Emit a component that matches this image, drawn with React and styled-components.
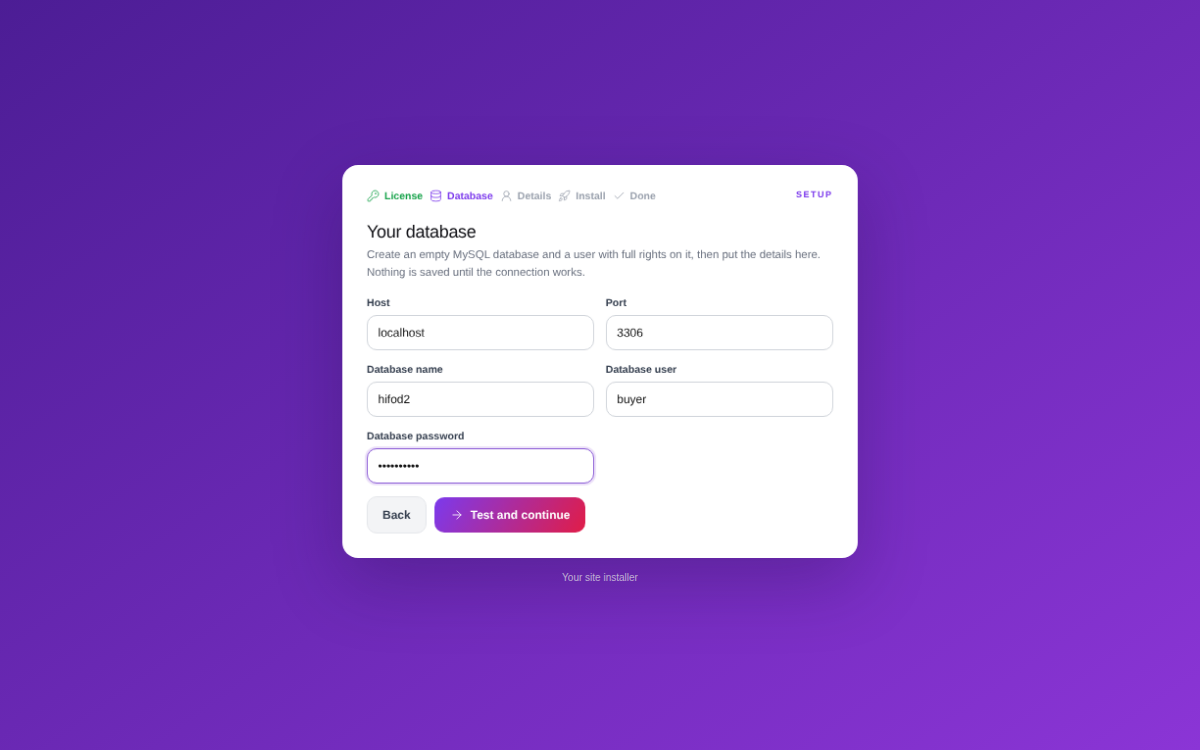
import React from "react";
import styled, { createGlobalStyle } from "styled-components";
import { KeyRound, Database, UserRound, Rocket, Check, ArrowRight } from "lucide-react";

const GlobalStyle = createGlobalStyle`
  * { box-sizing: border-box; }
  html, body { margin: 0; height: 100%; }
  body { font-family: "Liberation Sans", Arial, sans-serif; }
`;

const steps = [
  { label: "License", icon: KeyRound, state: "done" },
  { label: "Database", icon: Database, state: "active" },
  { label: "Details", icon: UserRound, state: "todo" },
  { label: "Install", icon: Rocket, state: "todo" },
  { label: "Done", icon: Check, state: "todo" },
];

const stepColors = { done: "#16a34a", active: "#7c3aed", todo: "#9ca3af" };

const App = () => {
  return (
    <Page>
      <GlobalStyle />
      <Card>
        <TopRow>
          <Steps>
            {steps.map((s) => (
              <Step key={s.label} $state={s.state}>
                <s.icon size={13} strokeWidth={1.5} />
                {s.label}
              </Step>
            ))}
          </Steps>
          <Tag>SETUP</Tag>
        </TopRow>
        <Title>Your database</Title>
        <Intro>
          Create an empty MySQL database and a user with full rights on it, then
          put the details here. Nothing is saved until the connection works.
        </Intro>
        <Fields>
          <Field>
            <Label>Host</Label>
            <Input defaultValue="localhost" />
          </Field>
          <Field>
            <Label>Port</Label>
            <Input defaultValue="3306" />
          </Field>
          <Field>
            <Label>Database name</Label>
            <Input defaultValue="hifod2" />
          </Field>
          <Field>
            <Label>Database user</Label>
            <Input defaultValue="buyer" />
          </Field>
          <Field>
            <Label>Database password</Label>
            <Input type="password" defaultValue="hifod2pass" $focused />
          </Field>
        </Fields>
        <Actions>
          <BackButton>Back</BackButton>
          <PrimaryButton>
            <ArrowRight size={14} strokeWidth={1.5} />
            Test and continue
          </PrimaryButton>
        </Actions>
      </Card>
      <Footer>Your site installer</Footer>
    </Page>
  );
};

const Page = styled.div`
  min-height: 100vh;
  display: flex;
  flex-direction: column;
  align-items: center;
  justify-content: center;
  background: linear-gradient(145deg, #4c1d95 0%, #8b35d6 100%);
`;
const Card = styled.div`
  width: 526px;
  height: 401px;
  padding: 25.5px 25.5px 25.5px 25px;
  background: #fff;
  border-radius: 16px;
  box-shadow: 0 24px 70px rgba(30, 10, 60, 0.28);
  transform: scale(0.98);
  will-change: transform;
  text-rendering: geometricPrecision;
`;
const TopRow = styled.div`
  display: flex;
  justify-content: space-between;
  align-items: center;
  height: 12px;
  margin-bottom: 18px;
`;
const Steps = styled.div`
  display: flex;
  align-items: center;
  gap: 7px;
`;
const Step = styled.span`
  display: inline-flex;
  align-items: center;
  gap: 5px;
  font-size: 10.5px;
  font-weight: 700;
  color: ${(p) => stepColors[p.$state]};
  svg {
    flex: none;
  }
`;
const Tag = styled.span`
  position: relative;
  top: -2px;
  font-size: 9px;
  font-weight: 700;
  letter-spacing: 1.5px;
  color: #7c3aed;
  line-height: 10px;
`;
const Title = styled.h1`
  margin: 0 0 3px;
  font-size: 18px;
  font-weight: 400;
  line-height: 24px;
  color: #0f0f14;
  letter-spacing: -0.3px;
`;
const Intro = styled.p`
  margin: 0 0 15.5px;
  font-size: 11.46px;
  line-height: 18.4px;
  color: #6b7280;
`;
const Fields = styled.div`
  display: grid;
  grid-template-columns: 1fr 1fr;
  column-gap: 12px;
  row-gap: 13.5px;
`;
const Field = styled.div`
  display: flex;
  flex-direction: column;
`;
const Label = styled.label`
  margin-bottom: 6px;
  font-size: 10.6px;
  font-weight: 700;
  line-height: 12px;
  color: #374151;
`;
const Input = styled.input`
  width: 100%;
  height: 36.5px;
  padding: 0 10.5px;
  font-family: inherit;
  font-size: 12px;
  text-rendering: geometricPrecision;
  color: #111;
  background: #fff;
  border-radius: 10px;
  outline: none;
  border: 1px solid ${(p) => (p.$focused ? "#8b5cd6" : "#d1d5db")};
  box-shadow: ${(p) => (p.$focused ? "0 0 0 2px rgba(124, 47, 214, 0.14)" : "none")};
`;
const Actions = styled.div`
  display: flex;
  align-items: center;
  gap: 8px;
  margin-top: 13px;
`;
const BackButton = styled.button`
  height: 38px;
  padding: 0 15px;
  font-family: inherit;
  font-size: 12px;
  font-weight: 700;
  text-rendering: geometricPrecision;
  color: #374151;
  background: #f3f4f6;
  border: 1px solid #e5e7eb;
  border-radius: 10px;
`;
const PrimaryButton = styled.button`
  display: flex;
  align-items: center;
  gap: 7px;
  height: 36px;
  padding: 0 16px;
  font-family: inherit;
  font-size: 12px;
  font-weight: 700;
  text-rendering: geometricPrecision;
  color: #fff;
  border: 0;
  border-radius: 10px;
  background: linear-gradient(120deg, #7c3aed, #e11d48);
`;
const Footer = styled.div`
  margin: 10px 0 5px;
  font-size: 10px;
  line-height: 12px;
  color: rgba(255, 255, 255, 0.75);
`;

export default App;
